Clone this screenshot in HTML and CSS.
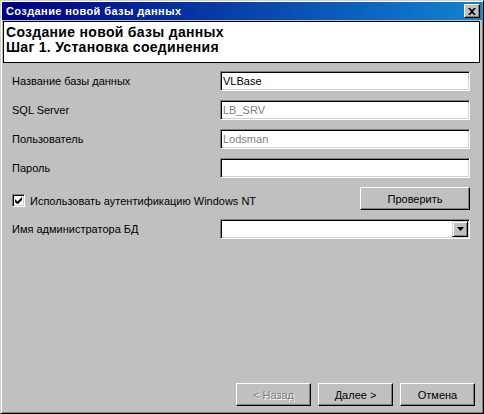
FILE: index.html
```html
<!DOCTYPE html>
<html lang="ru">
<head>
<meta charset="utf-8">
<title>Создание новой базы данных</title>
<link rel="stylesheet" href="styles.css">
</head>
<body>
<div class="window">
  <div class="titlebar">
    <span class="title">Создание новой базы данных</span>
    <span class="close"><svg width="8" height="7" viewBox="0 0 8 7"><path d="M0 0h2l2 2 2-2h2L5 3.5 8 7H6L4 5 2 7H0l3-3.5z" fill="#000"/></svg></span>
  </div>
  <div class="header">
    <div>Создание новой базы данных</div>
    <div>Шаг 1. Установка соединения</div>
  </div>
  <div class="content">
    <div class="form">
      <div class="row">
        <span class="label">Название базы данных</span>
        <div class="field">VLBase</div>
      </div>
      <div class="row">
        <span class="label">SQL Server</span>
        <div class="field disabled">LB_SRV</div>
      </div>
      <div class="row">
        <span class="label">Пользователь</span>
        <div class="field disabled">Lodsman</div>
      </div>
      <div class="row">
        <span class="label">Пароль</span>
        <div class="field"></div>
      </div>
      <div class="row row-tall">
        <span class="check">
          <span class="box"><svg width="7" height="7" viewBox="0 0 7 7"><path d="M0 2v3l2 2h1l4-4V0L2.5 4.5z" fill="#000"/></svg></span>
          <span>Использовать аутентификацию Windows NT</span>
        </span>
        <span class="btn verify">Проверить</span>
      </div>
      <div class="row">
        <span class="label">Имя администратора БД</span>
        <div class="field combo">
          <span class="combo-text"></span>
          <span class="combo-btn"><svg width="7" height="4" viewBox="0 0 7 4"><path d="M0 0h7L3.5 4z" fill="#000"/></svg></span>
        </div>
      </div>
    </div>
    <div class="footer">
      <span class="btn disabled">&lt; Назад</span>
      <span class="btn">Далее &gt;</span>
      <span class="btn">Отмена</span>
    </div>
  </div>
</div>
</body>
</html>
```

FILE: styles.css
```css
html, body {
  margin: 0;
  padding: 0;
  background: #c0c0c0;
}

body {
  font-family: "Liberation Sans", Arial, sans-serif;
  font-size: 11px;
  color: #000;
}

.window {
  box-sizing: border-box;
  width: 484px;
  height: 414px;
  background: #c0c0c0;
  border: 1px solid;
  border-color: #d4d0c8 #000 #000 #d4d0c8;
  box-shadow: inset 1px 1px #fff, inset -1px -1px #808080;
  padding: 1px;
  display: flex;
  flex-direction: column;
}

.titlebar {
  height: 18px;
  flex: none;
  display: flex;
  align-items: center;
  justify-content: space-between;
  padding: 0 2px 0 4px;
  background: linear-gradient(to right, #000080, #1084d0);
}

.title {
  color: #fff;
  font-weight: bold;
  font-size: 11px;
  letter-spacing: 0.4px;
}

.close {
  box-sizing: border-box;
  width: 16px;
  height: 14px;
  display: flex;
  align-items: center;
  justify-content: center;
  background: #c0c0c0;
  border: 1px solid;
  border-color: #fff #000 #000 #fff;
  box-shadow: inset -1px -1px #808080;
}

.header {
  box-sizing: border-box;
  height: 42px;
  margin: 1px 2px 0 1px;
  border: 1px solid #000;
  background: #fff;
  padding: 3px 0 0 2px;
  font-weight: bold;
  font-size: 14px;
  letter-spacing: 0.3px;
  line-height: 15px;
}

.content {
  flex: 1;
  display: flex;
  flex-direction: column;
  padding: 8px 7px 6px 10px;
}

.form {
  width: 458px;
  display: flex;
  flex-direction: column;
  gap: 9px;
}

.row {
  display: flex;
  align-items: center;
  height: 20px;
}

.row-tall {
  height: 23px;
  justify-content: space-between;
}

.label {
  width: 208px;
  flex: none;
}

.field {
  box-sizing: border-box;
  width: 250px;
  height: 20px;
  background: #fff;
  border: 1px solid;
  border-color: #808080 #fff #fff #808080;
  box-shadow: inset 1px 1px #000, inset -1px -1px #d4d0c8;
  padding: 0 2px 0 2px;
  line-height: 18px;
}

.field.disabled {
  color: #808080;
}

.combo {
  display: flex;
  align-items: center;
  padding: 1px;
}

.combo-text {
  flex: 1;
}

.combo-btn {
  box-sizing: border-box;
  width: 16px;
  height: 16px;
  display: flex;
  align-items: center;
  justify-content: center;
  background: #c0c0c0;
  border: 1px solid;
  border-color: #d4d0c8 #000 #000 #d4d0c8;
  box-shadow: inset 1px 1px #fff, inset -1px -1px #808080;
}

.check {
  display: flex;
  align-items: center;
  gap: 5px;
  margin-top: 4px;
}

.box {
  box-sizing: border-box;
  width: 13px;
  height: 13px;
  display: flex;
  align-items: center;
  justify-content: center;
  background: #fff;
  border: 1px solid;
  border-color: #808080 #fff #fff #808080;
  box-shadow: inset 1px 1px #000, inset -1px -1px #d4d0c8;
}

.btn {
  box-sizing: border-box;
  width: 75px;
  height: 23px;
  display: flex;
  align-items: center;
  justify-content: center;
  background: #c0c0c0;
  border: 1px solid;
  border-color: #fff #000 #000 #fff;
  box-shadow: inset -1px -1px #808080;
}

.btn.verify {
  width: 110px;
}

.btn.disabled {
  color: #808080;
  text-shadow: 1px 1px #fff;
}

.footer {
  margin-top: auto;
  display: flex;
  justify-content: flex-end;
  gap: 7px;
}
```
